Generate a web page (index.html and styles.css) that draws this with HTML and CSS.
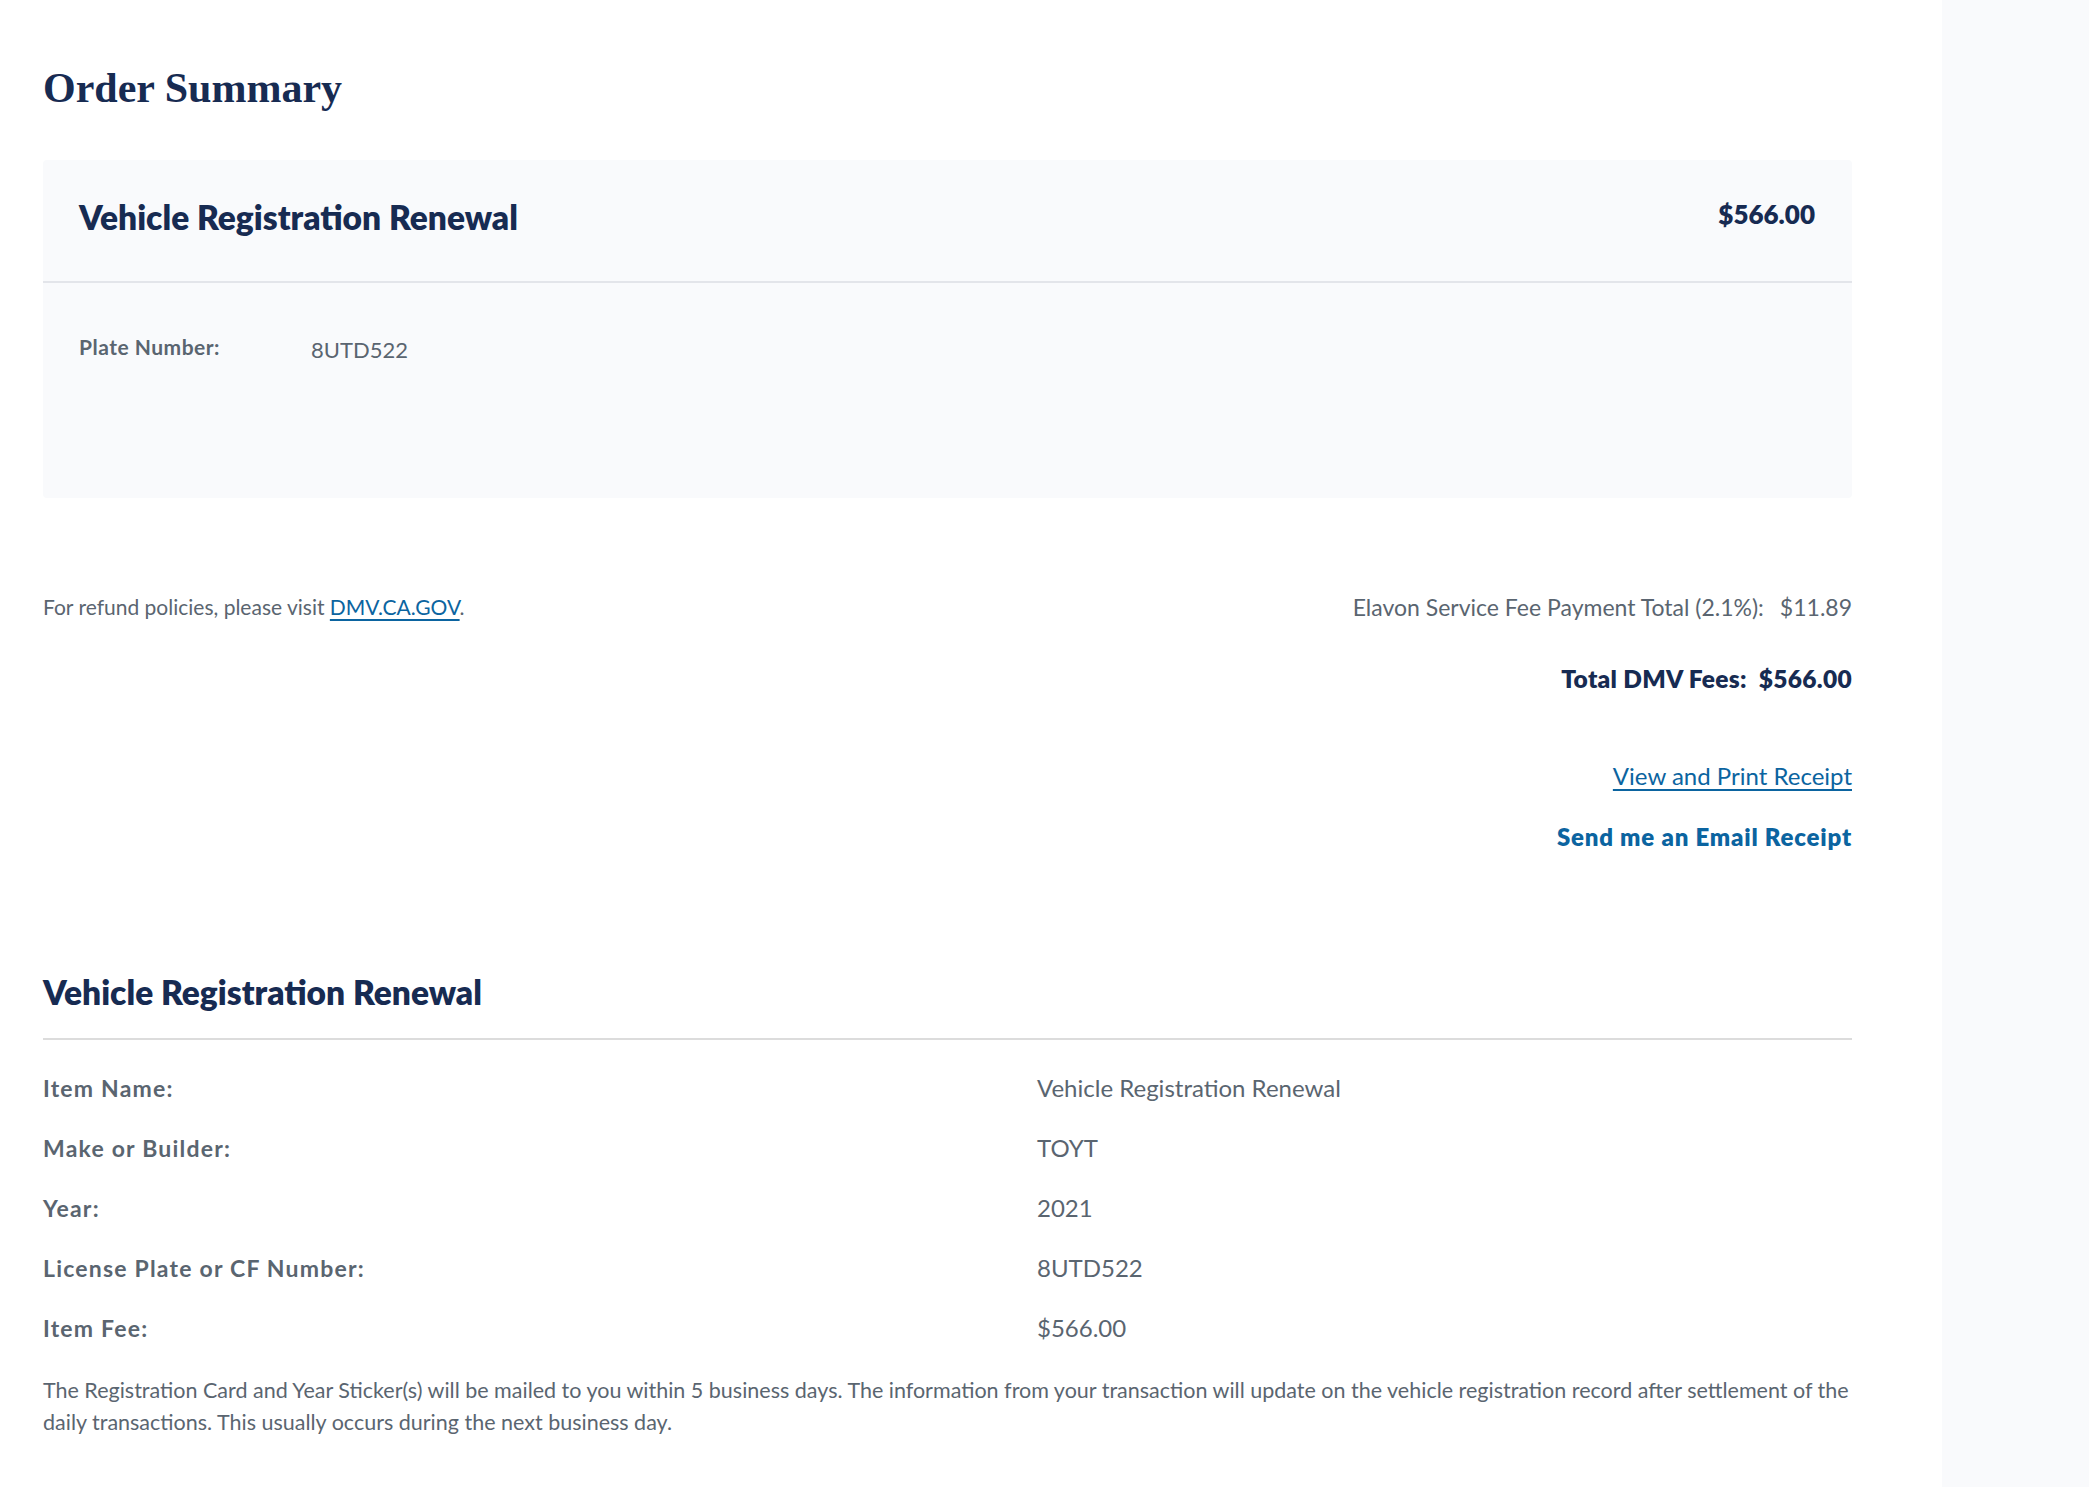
FILE: index.html
```html
<!DOCTYPE html>
<html lang="en">
<head>
<meta charset="utf-8">
<title>Order Summary</title>
<link rel="stylesheet" href="styles.css">
</head>
<body>
<div class="page">
  <main class="main">
    <h1 class="page-title">Order Summary</h1>

    <section class="order-card">
      <div class="order-card__head">
        <h2 class="order-card__title">Vehicle Registration Renewal</h2>
        <span class="order-card__price">$566.00</span>
      </div>
      <div class="order-card__body">
        <span class="order-card__label">Plate Number:</span>
        <span class="order-card__value">8UTD522</span>
      </div>
    </section>

    <section class="totals">
      <p class="refund">For refund policies, please visit <a class="link" href="#">DMV.CA.GOV</a>.</p>
      <div class="totals__right">
        <p class="fee"><span>Elavon Service Fee Payment Total (2.1%):</span><span>$11.89</span></p>
        <p class="grand"><span>Total DMV Fees:</span><span>$566.00</span></p>
        <a class="link receipt-link" href="#">View and Print Receipt</a>
        <a class="email-link" href="#">Send me an Email Receipt</a>
      </div>
    </section>

    <section class="details">
      <h2 class="details__title">Vehicle Registration Renewal</h2>
      <dl class="details__list">
        <dt>Item Name:</dt><dd>Vehicle Registration Renewal</dd>
        <dt>Make or Builder:</dt><dd>TOYT</dd>
        <dt>Year:</dt><dd>2021</dd>
        <dt>License Plate or CF Number:</dt><dd>8UTD522</dd>
        <dt>Item Fee:</dt><dd>$566.00</dd>
      </dl>
      <p class="details__note">The Registration Card and Year Sticker(s) will be mailed to you within 5 business days. The information from your transaction will update on the vehicle registration record after settlement of the daily transactions. This usually occurs during the next business day.</p>
    </section>
  </main>
  <aside class="side"></aside>
</div>
</body>
</html>
```
FILE: styles.css
```css
* { box-sizing: border-box; }
html, body { margin: 0; padding: 0; }
body {
  font-family: Lato, "Noto Sans", sans-serif;
  color: #5b6670;
  background: #fff;
}
p { margin: 0; }

.page {
  display: flex;
  min-height: 1487px;
}
.main {
  width: 1942px;
  flex: none;
  padding: 0 90px 40px 43px;
}
.side {
  flex: 1;
  background: #f9fafc;
}

.page-title {
  margin: 0;
  padding-top: 60px;
  height: 160px;
  font-family: "Liberation Serif", "Times New Roman", serif;
  font-weight: 700;
  font-size: 42px;
  line-height: 56px;
  color: #172b52;
}

.order-card {
  background: #f9fafc;
  border-radius: 4px;
  height: 338px;
}
.order-card__head {
  display: flex;
  justify-content: space-between;
  align-items: flex-start;
  height: 123px;
  padding: 35px 37px 0 36px;
  border-bottom: 2px solid #e3e5ea;
}
.order-card__title {
  margin: 0;
  font-size: 33.5px;
  line-height: 44px;
  font-weight: 800;
  color: #172b52;
}
.order-card__price {
  font-size: 26px;
  line-height: 38px;
  font-weight: 800;
  color: #172b52;
}
.order-card__body {
  display: flex;
  align-items: baseline;
  padding: 50px 36px 0;
}
.order-card__label {
  width: 232px;
  font-size: 21px;
  font-weight: 700;
  letter-spacing: 0.5px;
  color: #5a6570;
}
.order-card__value {
  font-size: 22px;
  color: #5a6570;
  position: relative;
  top: 3px;
}

.totals {
  display: flex;
  justify-content: space-between;
  align-items: flex-start;
  padding-top: 93px;
}
.refund {
  font-size: 21px;
  line-height: 32px;
  color: #5a6570;
}
.link {
  color: #0b64a0;
  text-decoration: underline;
  text-decoration-thickness: 2px;
  text-underline-offset: 4px;
}
.totals__right {
  display: flex;
  flex-direction: column;
  align-items: flex-end;
}
.fee {
  display: flex;
  gap: 16px;
  font-size: 23px;
  line-height: 32px;
  color: #5a6570;
}
.grand {
  display: flex;
  gap: 12px;
  margin-top: 40px;
  font-size: 24.5px;
  line-height: 32px;
  font-weight: 800;
  letter-spacing: 0.3px;
  color: #172b52;
}
.receipt-link {
  margin-top: 65px;
  font-size: 24px;
  line-height: 32px;
}
.email-link {
  margin-top: 29px;
  font-size: 24px;
  line-height: 32px;
  font-weight: 800;
  letter-spacing: 0.8px;
  color: #0b64a0;
  text-decoration: none;
}

.details {
  padding-top: 117px;
}
.details__title {
  margin: 0;
  padding-bottom: 24px;
  font-size: 33.5px;
  line-height: 44px;
  font-weight: 800;
  color: #172b52;
  border-bottom: 2px solid #dcdcdc;
}
.details__list {
  display: grid;
  grid-template-columns: 994px 1fr;
  row-gap: 28px;
  margin: 32px 0 0;
}
.details__list dt {
  font-size: 23px;
  line-height: 32px;
  font-weight: 700;
  letter-spacing: 1.2px;
  color: #5a6570;
}
.details__list dd {
  margin: 0;
  font-size: 24px;
  line-height: 32px;
  color: #5a6570;
}
.details__note {
  margin-top: 30px;
  font-size: 21.5px;
  line-height: 32px;
  color: #5a6570;
}
```
